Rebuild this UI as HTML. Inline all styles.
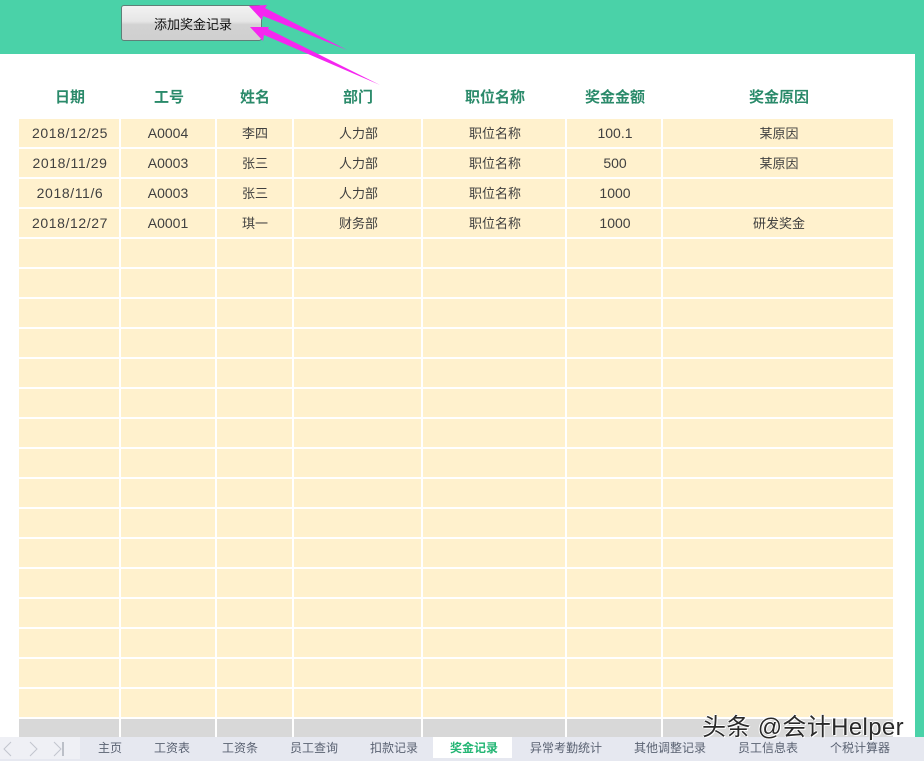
<!DOCTYPE html>
<html lang="zh">
<head>
<meta charset="utf-8">
<style>
html,body{margin:0;padding:0}
body{width:924px;height:761px;overflow:hidden;position:relative;background:#fff;font-family:"Liberation Sans","Noto Sans CJK SC",sans-serif}
div,span{position:absolute;box-sizing:border-box}
#top{left:0;top:0;width:924px;height:54px;background:#4ad2a8}
#right{left:915px;top:54px;width:9px;height:683px;background:#4ad2a8}
#btn{left:121px;top:5px;width:141px;height:36px;border:1px solid #5f7f78;border-radius:3px;background:linear-gradient(#f2f2f2 0%,#e6e6e6 45%,#d2d2d2 55%,#d0d0d0 100%);color:#111;font-size:13px;line-height:37px;text-align:center;padding-left:3px}
.col{top:119px;height:598px;background:repeating-linear-gradient(#fff1cd 0,#fff1cd 28px,#fff 28px,#fff 30px)}
.g{top:719px;height:18px;background:#d8d8d8}
.c{text-align:center;white-space:nowrap;height:30px;line-height:28px;font-size:14px;color:#404040}
.z{font-size:13px;line-height:30px}
.d{letter-spacing:.6px}
.h{top:87px;height:22px;line-height:22px;font-size:15px;font-weight:bold;color:#2a8a6a;text-align:center;white-space:nowrap}
#tabs{left:0;top:737px;width:924px;height:24px;background:#e6e8f0}
#nav{left:0;top:737px;width:80px;height:22px;background:#eff0f5}
.t{top:737px;height:22px;line-height:23px;font-size:12px;color:#5a6272;text-align:center;white-space:nowrap}
#on{left:433px;top:737px;width:79px;height:21px;background:#fff}
#wm{left:702px;top:713px;font-size:24px;line-height:30px;color:#2a2a2a;white-space:nowrap;text-shadow:1px 1px 0 #fff,-1px 0 0 #fff,0 -1px 0 #fff;letter-spacing:.35px}
svg{position:absolute;left:0;top:0}
</style>
</head>
<body>
<div id="top"></div>
<div id="right"></div>
<div id="btn">添加奖金记录</div>

<span class="h" style="left:19px;width:102px">日期</span>
<span class="h" style="left:119px;width:100px">工号</span>
<span class="h" style="left:217px;width:76px">姓名</span>
<span class="h" style="left:294px;width:128px">部门</span>
<span class="h" style="left:423px;width:144px">职位名称</span>
<span class="h" style="left:567px;width:96px">奖金金额</span>
<span class="h" style="left:663px;width:232px">奖金原因</span>

<div class="col" style="left:19px;width:100px"></div>
<div class="col" style="left:121px;width:94px"></div>
<div class="col" style="left:217px;width:75px"></div>
<div class="col" style="left:294px;width:127px"></div>
<div class="col" style="left:423px;width:142px"></div>
<div class="col" style="left:567px;width:94px"></div>
<div class="col" style="left:663px;width:230px"></div>

<div class="g" style="left:19px;width:100px"></div>
<div class="g" style="left:121px;width:94px"></div>
<div class="g" style="left:217px;width:75px"></div>
<div class="g" style="left:294px;width:127px"></div>
<div class="g" style="left:423px;width:142px"></div>
<div class="g" style="left:567px;width:94px"></div>
<div class="g" style="left:663px;width:230px"></div>

<span class="c d" style="left:19px;width:102px;top:119px">2018/12/25</span>
<span class="c" style="left:119px;width:98px;top:119px">A0004</span>
<span class="c z" style="left:217px;width:76px;top:119px">李四</span>
<span class="c z" style="left:294px;width:129px;top:119px">人力部</span>
<span class="c z" style="left:423px;width:144px;top:119px">职位名称</span>
<span class="c" style="left:567px;width:96px;top:119px">100.1</span>
<span class="c z" style="left:663px;width:232px;top:119px">某原因</span>

<span class="c d" style="left:19px;width:102px;top:149px">2018/11/29</span>
<span class="c" style="left:119px;width:98px;top:149px">A0003</span>
<span class="c z" style="left:217px;width:76px;top:149px">张三</span>
<span class="c z" style="left:294px;width:129px;top:149px">人力部</span>
<span class="c z" style="left:423px;width:144px;top:149px">职位名称</span>
<span class="c" style="left:567px;width:96px;top:149px">500</span>
<span class="c z" style="left:663px;width:232px;top:149px">某原因</span>

<span class="c d" style="left:19px;width:102px;top:179px">2018/11/6</span>
<span class="c" style="left:119px;width:98px;top:179px">A0003</span>
<span class="c z" style="left:217px;width:76px;top:179px">张三</span>
<span class="c z" style="left:294px;width:129px;top:179px">人力部</span>
<span class="c z" style="left:423px;width:144px;top:179px">职位名称</span>
<span class="c" style="left:567px;width:96px;top:179px">1000</span>

<span class="c d" style="left:19px;width:102px;top:209px">2018/12/27</span>
<span class="c" style="left:119px;width:98px;top:209px">A0001</span>
<span class="c z" style="left:217px;width:76px;top:209px">琪一</span>
<span class="c z" style="left:294px;width:129px;top:209px">财务部</span>
<span class="c z" style="left:423px;width:144px;top:209px">职位名称</span>
<span class="c" style="left:567px;width:96px;top:209px">1000</span>
<span class="c z" style="left:663px;width:232px;top:209px">研发奖金</span>

<div id="tabs"></div>
<div id="nav"></div>
<div id="on"></div>
<span class="t" style="left:80px;width:60px">主页</span>
<span class="t" style="left:142px;width:60px">工资表</span>
<span class="t" style="left:210px;width:60px">工资条</span>
<span class="t" style="left:274px;width:80px">员工查询</span>
<span class="t" style="left:354px;width:80px">扣款记录</span>
<span class="t" style="left:434px;width:80px;color:#22b573;font-weight:bold">奖金记录</span>
<span class="t" style="left:516px;width:100px">异常考勤统计</span>
<span class="t" style="left:620px;width:100px">其他调整记录</span>
<span class="t" style="left:728px;width:80px">员工信息表</span>
<span class="t" style="left:820px;width:80px">个税计算器</span>

<svg width="924" height="761" viewBox="0 0 924 761">
<path d="M11 742L4 749L11 756M30 742L37 749L30 756M54 742L61 749L54 756" fill="none" stroke="#c2c5ce" stroke-width="1"/>
<path d="M63 742V756" stroke="#8a8f9a" stroke-width="1"/>
<polygon points="249,6 267,5 265,8 347,50 263,16 262,20" fill="#f526f0"/>
<polygon points="250,27 269,27 268,29 380,85 264,35 263,41" fill="#f526f0"/>
</svg>

<span id="wm">头条 @会计Helper</span>
</body>
</html>
